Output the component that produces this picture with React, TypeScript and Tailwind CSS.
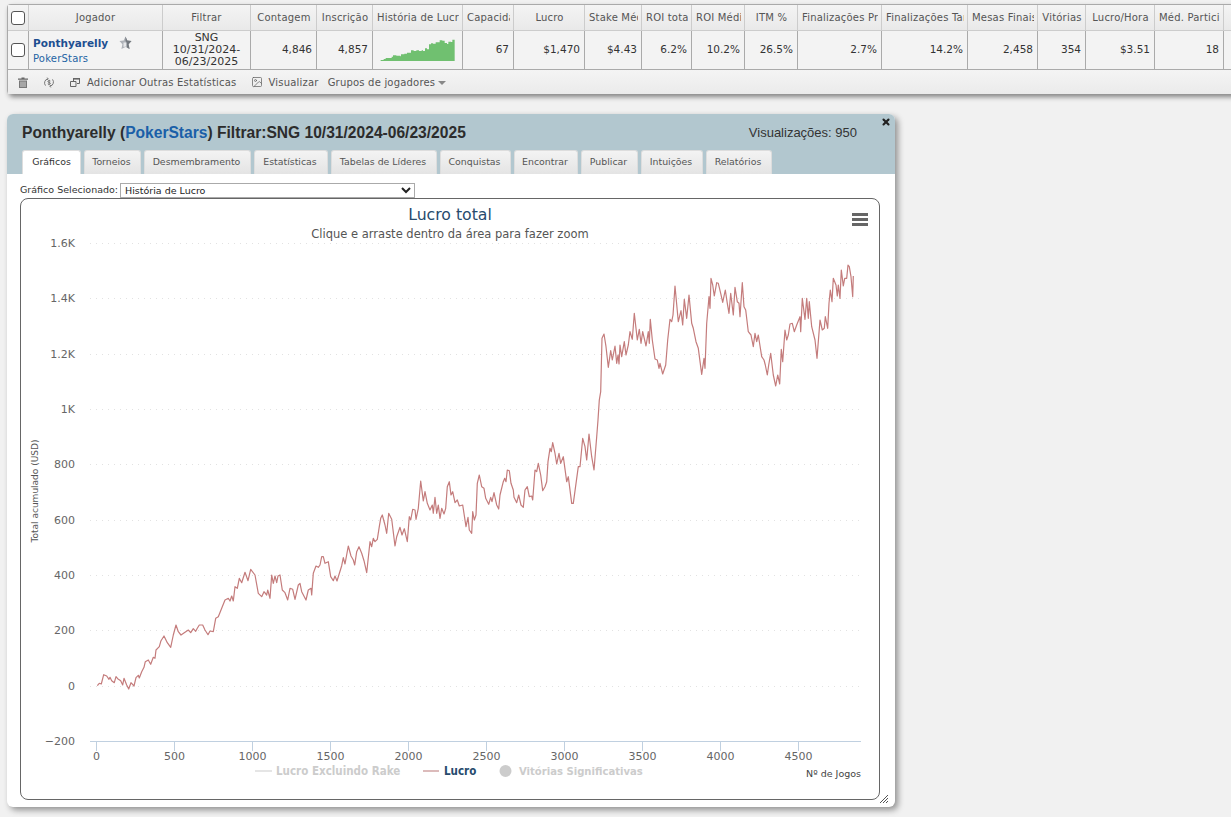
import { Image as ImageIcon, X } from 'lucide-react';

const columns = [
  { label: 'Contagem', value: '4,846' },
  { label: 'Inscrição', value: '4,857' },
  { label: 'História de Lucro', value: '' },
  { label: 'Capacidade', value: '67' },
  { label: 'Lucro', value: '$1,470' },
  { label: 'Stake Médio', value: '$4.43' },
  { label: 'ROI total', value: '6.2%' },
  { label: 'ROI Médio', value: '10.2%' },
  { label: 'ITM %', value: '26.5%' },
  { label: 'Finalizações Precoces', value: '2.7%' },
  { label: 'Finalizações Tardias', value: '14.2%' },
  { label: 'Mesas Finais', value: '2,458' },
  { label: 'Vitórias', value: '354' },
  { label: 'Lucro/Hora', value: '$3.51' },
  { label: 'Méd. Participantes', value: '18' },
  { label: 'Mais', value: '' },
];

const tabs = [
  { label: 'Gráficos', width: 'w-[59px]' },
  { label: 'Torneios', width: 'w-[57px]' },
  { label: 'Desmembramento', width: 'w-[107px]' },
  { label: 'Estatísticas', width: 'w-[74px]' },
  { label: 'Tabelas de Líderes', width: 'w-[106px]' },
  { label: 'Conquistas', width: 'w-[71px]' },
  { label: 'Encontrar', width: 'w-[64px]' },
  { label: 'Publicar', width: 'w-[57px]' },
  { label: 'Intuições', width: 'w-[62px]' },
  { label: 'Relatórios', width: 'w-[66px]' },
];

const yTicks = [
  { label: '1.6K', y: 243 },
  { label: '1.4K', y: 298 },
  { label: '1.2K', y: 354 },
  { label: '1K', y: 409 },
  { label: '800', y: 464 },
  { label: '600', y: 520 },
  { label: '400', y: 575 },
  { label: '200', y: 630 },
  { label: '0', y: 686 },
];

const xTicks = [0, 500, 1000, 1500, 2000, 2500, 3000, 3500, 4000, 4500];

// traced from the reference in 3x crops, each list has its own crop origin
const traceA = [52,467,58,460,64,462,71,434,80,438,87,448,90,442,95,452,103,458,108,440,113,446,122,452,128,465,132,445,140,465,146,477,153,458,162,468,168,443,175,436,178,444,185,425,192,412,196,395,205,390,212,403,220,382,225,385,228,360,238,350,243,332,252,318,262,338,272,352,280,315,288,285,295,305,303,315,325,300,332,308,340,296,347,304,352,295,358,285,368,285,375,300,384,314,390,303,400,305,407,265,415,260,425,235,435,210,445,205,450,213,455,198,460,213,465,170,472,175,478,145,485,158,495,127,504,152,512,118,525,135,535,190,545,200,552,185,560,195,563,180,570,205,575,135,580,160,585,138,590,158,594,138,600,135,607,180,615,188,623,210,630,175,638,178,645,208,655,165,660,160,665,185,678,210,685,180,693,175,695,195,700,130,708,108,715,112,720,105,725,80,730,80,735,100,745,95,752,140,760,152,765,138,771,153];
const traceB = [5,437,10,413,15,432,25,378,33,408,40,420,44,435,50,395,57,380,65,400,72,422,80,458,90,365,95,380,100,355,105,365,112,358,118,320,122,295,127,285,135,315,140,340,146,280,155,298,165,378,170,350,180,322,186,345,193,326,202,365,208,290,212,300,218,268,225,270,228,298,235,265,242,183,250,243,255,215,262,250,270,270,277,255,280,280,285,232,290,280,295,255,300,295,305,265,312,282,317,265,322,200,328,185,333,225,338,215,345,248,352,240,358,258,368,255,378,320,384,292,388,330,395,340,398,275,403,300,408,285,412,190,418,165,425,200,432,205,437,235,446,253,452,232,456,245,462,218,470,255,476,267,480,225,490,185,494,175,498,185,502,150,508,152,513,190,520,210,522,232,530,248,536,225,543,255,550,262,555,210,562,200,568,230,575,228,578,240,585,150,590,155,595,130,602,165,608,212,615,200,620,185,624,125,630,85,634,95,638,68,645,100,650,132,657,100,662,130,670,110,680,185,685,170,695,250,700,250];
const traceC = [25,620,30,620,38,535,45,560,50,600,57,522,65,590,72,630,80,530,84,480,88,420,92,395,96,235,102,222,108,260,115,322,122,272,127,300,135,258,140,310,144,285,147,312,150,255,155,290,163,245,168,285,175,255,180,215,187,238,193,160,202,240,208,208,213,250,218,215,228,258,235,215,238,250,241,178,247,240,255,297,262,300,267,325,270,310,278,342,287,315,293,240,300,178,305,185,309,165,315,78,325,185,333,152,338,195,343,118,350,175,357,105,365,190,370,205,378,245,385,265,395,343,402,295,405,325,410,190,417,110,420,145,423,55,428,75,433,108,440,68,445,70,452,100,458,127,466,90,472,130,477,160,482,100,490,165,495,82,502,125,507,130,510,170,517,68,522,140,527,150,535,215,543,225,550,260,555,220,560,245,565,225,575,290,582,300,586,315,592,345,596,315,602,280,610,345,617,378,623,345,629,372,634,268,638,305,645,210,650,240,655,225,660,192,667,190,673,215,680,195,690,170,692,215,697,115,705,178,710,115,715,175,718,125,725,200,735,240,741,295,750,180,757,210,763,205,766,170,773,205,777,130,781,90,786,125,790,55,798,75,802,108,805,75,810,115,814,30,820,78,824,55,830,55,834,15,838,20,843,50,848,110,850,48];

const toPoints = (trace: number[], ox: number, oy: number) => {
  const out: string[] = [];
  for (let i = 0; i < trace.length; i += 2) {
    out.push(`${(ox + trace[i] / 3).toFixed(1)},${(oy + trace[i + 1] / 3).toFixed(1)}`);
  }
  return out.join(' ');
};

const profitLine = [toPoints(traceA, 80, 530), toPoints(traceB, 340, 420), toPoints(traceC, 570, 260)].join(' ');

const sparkTops = [[33,90],[42,87],[48,84],[63,84],[66,80],[70,76],[80,77],[92,79],[94,73],[104,71],[112,68],[122,68],[124,61],[132,63],[140,61],[148,63],[156,61],[160,63],[166,55],[172,58],[178,43],[184,40],[190,41],[198,37],[210,31],[218,32],[225,39],[232,42],[236,35],[244,36],[248,29],[255,27]];

const Sparkline = () => {
  const pts: string[] = ['33,93'];
  sparkTops.forEach(([x, y], i) => {
    const next = sparkTops[i + 1];
    pts.push(`${x},${y}`);
    if (next) pts.push(`${next[0]},${y}`);
  });
  pts.push('255,93');
  return (
    <svg className="h-[38px] w-[89px]" viewBox="10 3 267 114">
      <polygon points={pts.join(' ')} fill="#70c070" />
    </svg>
  );
};

const Checkbox = () => (
  <div className="h-[14px] w-[14px] rounded-[3px] border border-[#555] bg-white" />
);

const PlayerStar = () => (
  <svg className="h-[14px] w-[13px]" viewBox="0 0 13 14">
    <path d="M6.5 0.5 L8.3 4.4 L12.5 5 L9.6 8.2 L10.6 13 L6.5 11 L2.4 13 L3.4 8.2 L0.5 5 L4.7 4.4 Z" fill="#aeb2b8" />
    <path d="M6.5 0.5 L8.3 4.4 L12.5 5 L9.6 8.2 L10.6 13 L8 11.6 L8 7 L6.5 5 Z" fill="#74797f" />
    <path d="M4.5 6.5 L7 6.5 L7 10.5 L4.5 11 Z" fill="#e6e7e9" />
  </svg>
);

const TrashIcon = () => (
  <svg className="h-[11px] w-[10px]" viewBox="0 0 10 11">
    <path d="M3.5 0.5 H6.5 V1.5 H10 V2.8 H0 V1.5 H3.5 Z" fill="#666" />
    <path d="M1 3.5 H9 V11 H1 Z" fill="#777" />
    <path d="M3 4.5 V10 M5 4.5 V10 M7 4.5 V10" stroke="#eee" strokeWidth="0.8" />
  </svg>
);

const RefreshDollar = () => (
  <svg className="h-[11px] w-[10px]" viewBox="0 0 10 11" fill="none" stroke="#777" strokeWidth="1">
    <path d="M1.5 8.6 A4.3 4.3 0 0 1 3.6 1.8" />
    <path d="M8.5 2.4 A4.3 4.3 0 0 1 6.4 9.2" />
    <path d="M3.2 0.6 L4.2 1.9 L2.8 2.9 M6.8 10.4 L5.8 9.1 L7.2 8.1" />
    <path d="M6.4 4 C5.7 3.3 3.9 3.5 3.9 4.5 C3.9 5.8 6.4 5.1 6.4 6.4 C6.4 7.4 4.6 7.6 3.8 6.9" />
    <path d="M5.1 2.8 V8.2" />
  </svg>
);

const WindowsIcon = () => (
  <svg className="h-[9px] w-[10px]" viewBox="0 0 10 9" fill="none" stroke="#666" strokeWidth="1">
    <path d="M3.5 3 V0.5 H9.5 V5.5 H7" />
    <path d="M3 0 H10 V1.6 H3 Z" fill="#666" stroke="none" />
    <path d="M0.5 3.5 H6 V8.5 H0.5 Z" />
  </svg>
);

const ProfitChart = () => (
  <svg className="block h-[600px] w-[858px]" viewBox="21 199 858 600" fontFamily="'DejaVu Sans', sans-serif">
    <text x="450" y="220" textAnchor="middle" fontSize="15.7" fill="#274b6d">Lucro total</text>
    <text x="450" y="238" textAnchor="middle" fontSize="11.5" fill="#555">Clique e arraste dentro da área para fazer zoom</text>

    <rect x="852" y="213" width="16" height="3" fill="#666" />
    <rect x="852" y="218" width="16" height="3" fill="#666" />
    <rect x="852" y="223" width="16" height="3" fill="#666" />

    {yTicks.map((tick) => (
      <g key={tick.label}>
        <line x1="90" x2="861" y1={tick.y + 0.5} y2={tick.y + 0.5} stroke="#e2e2e2" strokeDasharray="1 5" />
        <text x="75" y={tick.y + 4} textAnchor="end" fontSize="11" fill="#666">{tick.label}</text>
      </g>
    ))}
    <text x="75" y="745" textAnchor="end" fontSize="11" fill="#666">−200</text>

    <line x1="90" x2="861" y1="741.5" y2="741.5" stroke="#c0d0e0" />
    {xTicks.map((tick) => {
      const x = 96.5 + (tick / 500) * 78;
      return (
        <g key={tick}>
          <line x1={x} x2={x} y1="741" y2="751" stroke="#c0d0e0" />
          <text x={x} y="760" textAnchor="middle" fontSize="11" fill="#666">{tick}</text>
        </g>
      );
    })}

    <polyline points={profitLine} fill="none" stroke="#c47c7c" strokeWidth="1.2" strokeLinejoin="round" />

    <text transform="translate(38 491) rotate(-90)" textAnchor="middle" fontSize="9" fill="#555">Total acumulado (USD)</text>
    <text x="861" y="777" textAnchor="end" fontSize="9.5" fill="#444">Nº de Jogos</text>

    <g fontFamily="'DejaVu Sans Condensed', 'DejaVu Sans', sans-serif" fontSize="11.5" fontWeight="700">
      <line x1="255" x2="272" y1="771" y2="771" stroke="#ddd" strokeWidth="1.5" />
      <text x="276" y="775" fill="#ccc">Lucro Excluindo Rake</text>
      <line x1="423" x2="439" y1="771" y2="771" stroke="#d0a5a5" strokeWidth="1.5" />
      <text x="444" y="775" fill="#274b6d">Lucro</text>
      <circle cx="505.5" cy="771" r="6" fill="#ccc" />
      <text x="519" y="775" fontSize="11.2" fill="#ccc">Vitórias Significativas</text>
    </g>
  </svg>
);

export default function App() {
  return (
    <div className="h-[817px] w-full overflow-hidden bg-[#f1f1f1] pt-[4px] pl-[7px] font-['DejaVu_Sans',sans-serif] text-[10px] text-[#333]">
      <div className="w-[1300px] rounded-bl-[4px] rounded-tl-[4px] border-t border-l border-[#aaa] bg-[#f3f3f3] shadow-[2px_3px_5px_rgba(0,0,0,0.45)]">
        <div className="grid grid-cols-[21px_134px_88px_66px_56px_90px_51px_71px_57px_50px_53px_53px_84px_86px_70px_48px_69px_69px_60px] border-b border-[#aaa]">
          <div className="flex h-[26px] items-center justify-center border-r border-b border-[#ccc] bg-gradient-to-b from-[#f4f4f4] to-[#e9e9e9]">
            <Checkbox />
          </div>
          <div className="flex h-[26px] items-center justify-center border-r border-b border-[#ccc] bg-gradient-to-b from-[#f4f4f4] to-[#e9e9e9] tracking-[0.2px] text-[#555]">Jogador</div>
          <div className="flex h-[26px] items-center justify-center border-r border-b border-[#ccc] bg-gradient-to-b from-[#f4f4f4] to-[#e9e9e9] tracking-[0.2px] text-[#555]">Filtrar</div>
          {columns.map((col) => (
            <div key={col.label} className="h-[26px] border-r border-b border-[#ccc] bg-gradient-to-b from-[#f4f4f4] to-[#e9e9e9] pr-[3px] pl-[4px] text-center leading-[26px] tracking-[0.2px] whitespace-nowrap text-[#555]">
              <div className="overflow-hidden">{col.label}</div>
            </div>
          ))}

          <div className="flex h-[38px] items-center justify-center border-r border-[#aaa]">
            <Checkbox />
          </div>
          <div className="relative h-[38px] border-r border-[#aaa] pt-[4px] pl-[4px]">
            <div className="text-[10.5px] leading-[17px] font-bold text-[#1d4f91]">Ponthyarelly</div>
            <div className="leading-[14px] tracking-[0.2px] text-[#2464a4]">PokerStars</div>
            <div className="absolute top-[5px] left-[90px]">
              <PlayerStar />
            </div>
          </div>
          <div className="flex h-[38px] items-center justify-center border-r border-[#aaa] text-center text-[11px] leading-[12px]">
            SNG
            <br />
            10/31/2024-
            <br />
            06/23/2025
          </div>
          {columns.map((col) =>
            col.label === 'História de Lucro' ? (
              <div key={col.label} className="flex h-[38px] items-center border-r border-[#aaa]">
                <Sparkline />
              </div>
            ) : (
              <div key={col.label} className="flex h-[38px] items-center justify-end border-r border-[#aaa] pr-[4px] text-[10.5px]">
                {col.value}
              </div>
            ),
          )}
        </div>

        <div className="flex h-[24px] items-center bg-gradient-to-b from-[#f4f4f4] to-[#ebebeb] tracking-[0.2px] text-[#555]">
          <div className="ml-[10px]">
            <TrashIcon />
          </div>
          <div className="ml-[16px]">
            <RefreshDollar />
          </div>
          <div className="ml-[16px]">
            <WindowsIcon />
          </div>
          <span className="ml-[7px]">Adicionar Outras Estatísticas</span>
          <ImageIcon className="ml-[14px] h-[12px] w-[12px]" strokeWidth={1.5} color="#666" />
          <span className="ml-[6px]">Visualizar</span>
          <span className="ml-[9px]">Grupos de jogadores</span>
          <span className="mt-[1px] ml-[3px] h-0 w-0 border-x-[4px] border-t-[4px] border-x-transparent border-t-[#888]" />
        </div>
      </div>

      <div className="relative mt-[20px] h-[693px] w-[888px] rounded-[6px] bg-white shadow-[3px_3px_6px_rgba(0,0,0,0.4)]">
        <div className="h-[60px] rounded-t-[6px] bg-[#b2c7cf] pt-[10px]">
          <div className="flex h-[17px] items-center justify-between pr-[38px] pl-[15px] font-['Liberation_Sans',sans-serif]">
            <div className="text-[15.6px] font-bold text-[#2c2c2c]">
              Ponthyarelly (<span className="text-[#1a5fa8]">PokerStars</span>) Filtrar:SNG 10/31/2024-06/23/2025
            </div>
            <div className="text-[13px] text-[#333]">Visualizações: 950</div>
          </div>
          <div className="mt-[9px] flex gap-[3px] pl-[15px]">
            {tabs.map((tab, i) => (
              <div
                key={tab.label}
                className={
                  i === 0
                    ? `${tab.width} h-[24px] rounded-t-[3px] border-x border-t border-[#ddd] bg-white text-center text-[9.4px] leading-[21px] text-[#333]`
                    : `${tab.width} h-[24px] rounded-t-[3px] border-x border-t border-[#ddd] bg-gradient-to-b from-[#f3f3f3] to-[#e4e4e4] pr-[2px] text-center text-[9.4px] leading-[21px] text-[#555]`
                }
              >
                {tab.label}
              </div>
            ))}
          </div>
        </div>
        <X className="absolute top-[3px] right-[4px] h-[10px] w-[10px]" strokeWidth={5} color="#222" />

        <div className="px-[13px] pt-[9px]">
          <div className="flex h-[15px] items-center gap-[3px]">
            <span className="w-[97px] text-[9.5px] whitespace-nowrap">Gráfico Selecionado:</span>
            <select className="h-[15px] w-[295px] border border-[#aaa] bg-white text-[9.5px] leading-[13px] text-[#222]" defaultValue="lucro">
              <option value="lucro">História de Lucro</option>
            </select>
          </div>
          <div className="h-[602px] w-[860px] rounded-[8px] border border-[#666] bg-white">
            <ProfitChart />
          </div>
        </div>

        <svg className="absolute right-[7px] bottom-[4px] h-[8px] w-[8px]" viewBox="0 0 8 8" stroke="#555" strokeWidth="1">
          <path d="M0 8 L8 0 M3 8 L8 3 M6 8 L8 6" />
        </svg>
      </div>
    </div>
  );
}
